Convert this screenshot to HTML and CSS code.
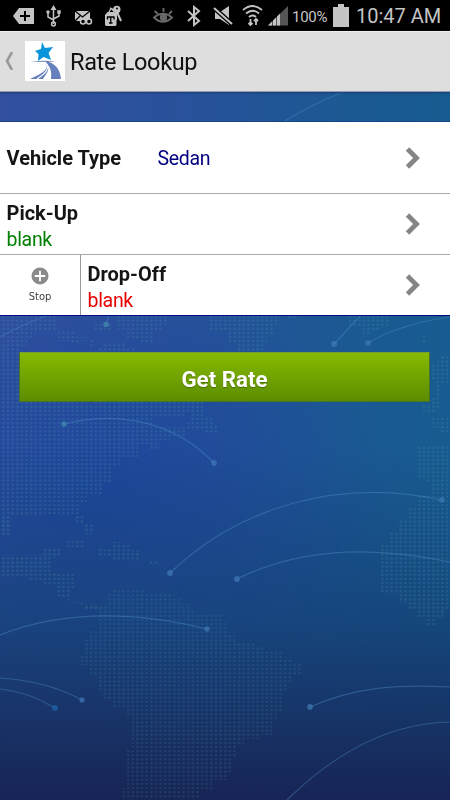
FILE: index.html
```html
<!DOCTYPE html>
<html lang="en">
<head>
<meta charset="utf-8">
<title>Rate Lookup</title>
<link rel="stylesheet" href="styles.css">
</head>
<body>
<div class="screen">
  <svg class="world" viewBox="0 0 450 800" aria-hidden="true">
    <defs>
      <pattern id="dots" width="4.622" height="4.1" x="1.1" y="416.95" patternUnits="userSpaceOnUse">
        <rect x="1.1" y="1" width="2.4" height="2.1" rx=".7"/>
      </pattern>
    </defs>
    <g class="land" fill="url(#dots)">
      <path d="M1 315H58V330H38L24 348H20V402H87V405H92V402H204V412H184V417H152V427H185V436H170V440H160V450H148V444H138V458H120V466H112V482H102V495H87V504H80V514H46V515H11V535H1Z"/>
      <path d="M94 324H112V332H94ZM58 331H76V337H88V341H58ZM71 340H80V343H71ZM89 340H94V347H103V342H126V347H134V352H98V347H89ZM117 315H168V325H162V332H154V343H140V338H126V329H117ZM209 315H280V325H275V334H267V343H263V352H238V342H228V330H209Z"/>
      <path d="M288 315H296V318H288ZM349 315H389V326H381V330H370V335H362V326H349ZM422 336H427V343H422ZM440 356H450V385H440V408H431V398H436V380H431V364H436ZM191 412H204V418H214V425H219V434H205V430H187V423H191ZM422 405H436V413H422ZM431 417H450V434H440V428H431Z"/>
      <path d="M418 446H450V610H445V619H436V625H426V618H416V610H408V603H400V595H391V592H381V545H390V532H399V518H408V508H417V495H431V482H426V478H417Z"/>
      <path d="M1 515H11V535H1ZM75 515H83V524H93V534H83V524H75ZM66 541H84V548H66ZM43 549H61V556H43ZM1 555H57V558H50V572H57V574H75V590H71V602H80V606H98V609H84V603H68V598H57V585H43V580H29V576H1ZM99 548H112V542H121V545H131V550H140V561H112V556H99ZM149 560H159V565H149Z"/>
      <path class="south" d="M112 590H145V593H172V599H181V604H191V611H196V615H222V623H229V635H235V643H255V646H263V651H283V657H292V663H301V675H292V682H287V690H282V712H277V719H272V735H260V739H244V744H236V758H231V772H227V780H212V790H201V798H122V788H127V750H132V718H126V708H112V699H103V690H98V676H89V665H80V655H85V640H90V631H99V610H85V604H108V594H112Z"/>
    </g>
    <g class="arcs">
      <path d="M283 122Q314 103 346 91M0 337Q25 323 49 315M109 315Q108 320 106 324M64 424C118 410 175 422 214 463M334 344L361 315M368 343Q400 324 450 317M170 573C238 508 337 477 442 500M237 579C303 546 380 547 450 562M0 635C66 609 137 612 207 629M0 678Q47 681 82 700M0 689Q29 692 55 708M310 707C355 687 399 684 450 687M287 800C337 751 390 723 450 722"/>
    </g>
    <g class="nodes">
      <circle class="teal" cx="106" cy="324.500" r="2.800"/><circle class="teal" cx="64" cy="424" r="2.800"/>
      <circle cx="214" cy="463" r="2.900"/><circle cx="334" cy="344" r="3"/><circle cx="368" cy="343" r="2.800"/>
      <circle cx="170" cy="573" r="2.900"/><circle cx="237" cy="579" r="2.900"/><circle cx="442" cy="500" r="2.800"/>
      <circle cx="207" cy="629" r="2.700"/><circle cx="82" cy="700" r="2.600"/><circle class="blue" cx="55" cy="708" r="3"/><circle cx="310" cy="707" r="2.900"/>
    </g>
  </svg>

  <header class="status">
    <svg class="tray" viewBox="0 0 290 31" aria-hidden="true">
      <path d="M13 16L19 8H34V24H19Z"/><path class="dark" d="M20 16H30M25 11V21"/>
      <g class="line"><path d="M53.500 9V24M48 12.500V17L53.500 20M59 12V16L53.500 19"/><circle cx="53.500" cy="24" r="1.900"/><circle cx="48" cy="12" r="1"/><path d="M58 11H60V13H58Z"/></g><path d="M53.500 5L56.500 10H50.500Z"/>
      <path d="M75 11H90V21H75Z"/><path class="dark thin" d="M75 11L82.500 17L90 11M75 21L80 16"/><g class="line"><circle class="hole" cx="83" cy="21.500" r="2.500"/><circle class="hole" cx="89" cy="21.500" r="2.500"/></g>
      <path d="M105 15L107.500 12H114L116.500 15V25L115.500 26H106L105 25Z"/><path class="dark thin" d="M107.500 19.500V17H114V19.500M110.750 17V23M109 23H112.500"/>
      <path class="key-blade" d="M117 12L121 21M116 13V20"/><circle cx="116.800" cy="9.500" r="3.700"/><path class="line thin" d="M109 12L111 8.500L115 12M110 8L115 10"/><circle class="hole" cx="117" cy="8.500" r="1"/>
      <g class="eye"><path d="M154 17.500Q163 10 172 17.500Q163 26 154 17.500Z"/><circle cx="163.500" cy="17.500" r="2.700"/><path d="M154.500 11L158 14M163.500 8V12M172 11L169 14"/></g>
      <path class="bt" d="M188 11L199 21L194 25V7L199 11L188 21"/>
      <path d="M215 12H220L229 6V25L220 19H215Z"/><path class="slash-back" d="M214 8L232 24"/><path class="slash" d="M214 8L232 24"/>
      <g class="wifi"><path d="M243 10Q252.500 2 262 10M246 13.500Q252.500 8 259 13.500M249 17Q252.500 14 256 17"/><path d="M250.500 19V25M248.500 23L250.500 25L252.500 23M256 25V19M254 21L256 19L258 21"/></g>
      <path class="signal-off" d="M268 25.500L288 6V25.500Z"/><path d="M268 25.500L272 21.500V25.500ZM273 25.500V20.500L276 17.500V25.500ZM277 25.500V16.500L280 13.500V25.500Z"/>
    </svg>
    <span class="percent">100%</span>
    <svg class="battery" viewBox="0 0 16 24" aria-hidden="true"><path d="M0 3H5V0H11V3H16V23H0Z"/></svg>
    <span class="clock">10:47 AM</span>
  </header>

  <div class="action-bar">
    <svg class="back" viewBox="0 0 8 18" aria-hidden="true"><path d="M7 0L2 9L7 18"/></svg>
    <svg class="logo" viewBox="0 0 40 40" aria-hidden="true">
      <path class="star" d="M17 1L20 7L28 6L23.500 12L26 19L18.500 16L13 20L13.500 13L10 10L16 8Z"/>
      <path class="road" d="M5 20.500Q21 19 31 20.500Q22 21 5 20.500ZM19 20C28 21 35 26 36 38H26C27 29 25 25 19 20ZM20 21C27 29 21 32 18 38H5C16 33 26 28 20 21Z"/>
      <path class="lane" d="M12 38C21 32 26 27 20 21"/>
    </svg>
    <h1>Rate Lookup</h1>
  </div>

  <main>
    <section class="form">
      <div class="row vehicle"><b>Vehicle Type</b><span class="choice">Sedan</span><svg class="chevron" viewBox="0 0 16 22"><path d="M2.500 2L11.500 11L2.500 20"/></svg></div>
      <div class="row place"><div class="field"><b>Pick-Up</b><span class="green">blank</span></div><svg class="chevron" viewBox="0 0 16 22"><path d="M2.500 2L11.500 11L2.500 20"/></svg></div>
      <div class="row place drop">
        <div class="stop"><svg viewBox="0 0 18 18"><circle cx="9" cy="9" r="8.500"/><path d="M9 3.700V14.300M3.700 9H14.300"/></svg><span>Stop</span></div>
        <div class="field"><b>Drop-Off</b><span class="red">blank</span></div><svg class="chevron" viewBox="0 0 16 22"><path d="M2.500 2L11.500 11L2.500 20"/></svg>
      </div>
    </section>
    <button class="rate">Get Rate</button>
  </main>
</div>
</body>
</html>
```
FILE: styles.css
```css
* { box-sizing: border-box; }
body { margin: 0; font-family: Roboto, "Liberation Sans", sans-serif; }
.screen {
  position: relative;
  width: 450px;
  height: 800px;
  overflow: hidden;
  background:
    linear-gradient(180deg, transparent 56%, rgba(20, 64, 118, .78) 78%, #172656 99%),
    radial-gradient(ellipse 300px 220px at 90px 490px, rgba(26, 68, 155, .85), transparent),
    linear-gradient(90deg, #3350a0 0%, #27529a 45%, #1b5992 78%, #175c90 100%);
}
.world { position: absolute; inset: 0; width: 450px; height: 800px; }
.land { opacity: .32; }
.land .south { opacity: .75; }
pattern rect { fill: #4790a5; }
.arcs { fill: none; stroke: #4f8fcb; stroke-width: 1.2; opacity: .4; }
.nodes { fill: #417ab7; opacity: .7; }
.nodes .teal { fill: #438cac; }
.nodes .blue { fill: #1b67ae; }

.status { position: relative; height: 31px; background: #000; display: flex; align-items: center; color: #c4c4c4; }
.tray { width: 290px; height: 31px; flex: none; fill: #c4c4c4; }
.tray .dark { stroke: #000; stroke-width: 2; fill: none; }
.tray .line { stroke: #c4c4c4; stroke-width: 1.5; fill: none; }
.tray .thin { stroke-width: 1.3; }
.tray .hole { fill: #000; }
.key-blade { stroke: #c4c4c4; stroke-width: 2; fill: none; }
.eye { fill: none; stroke: #686868; stroke-width: 1.9; }
.eye circle { fill: #686868; }
.bt { fill: none; stroke: #c4c4c4; stroke-width: 2; }
.slash-back { stroke: #000; stroke-width: 4.5; }
.slash { stroke: #c4c4c4; stroke-width: 2; }
.wifi { fill: none; stroke: #c4c4c4; stroke-width: 1.8; }
.signal-off { fill: #555; }
.percent { width: 43px; padding-left: 2px; font-size: 15px; letter-spacing: -.3px; padding-top: 3px; }
.battery { width: 16px; height: 24px; fill: #c4c4c4; flex: none; }
.clock { margin-left: 7px; font-size: 20px; white-space: nowrap; padding-top: 1px; }

.action-bar {
  position: relative;
  height: 61px;
  display: flex;
  align-items: center;
  padding: 0 0 1px 5px;
  background: #dedede;
  border-top: 1px solid #eee;
  border-bottom: 1px solid #929cad;
  box-shadow: 0 1px 2px #203b78;
}
.back { width: 8px; height: 18px; fill: none; stroke: #999; stroke-width: 2.6; }
.logo { width: 40px; height: 40px; margin: 0 5px 0 12px; background: #fff; }
.star { fill: #0794db; }
.road { fill: #667fbd; }
.lane { fill: none; stroke: #fff; stroke-width: 1.2; }
h1 { margin: 0; padding-top: 2px; font-size: 23.5px; letter-spacing: -.32px; font-weight: 400; color: #111; white-space: nowrap; }

main { position: relative; padding-top: 30px; }
.form { background: #fff; border-bottom: 1px solid #000c80; box-shadow: 0 -1px #164385; }
.row { display: flex; align-items: center; border-bottom: 1px solid #aaa; }
.row b { font-size: 20px; line-height: 26px; font-weight: 700; color: #151515; white-space: nowrap; }
.row span { font-size: 19.5px; line-height: 26px; letter-spacing: -.3px; padding-top: 1px; }
.row .choice { padding-top: 2px; }
.vehicle { height: 72px; padding-left: 6.5px; }
.vehicle b { width: 151px; }
.row .choice { color: #000080; }
.place { height: 61px; }
.drop { height: 60px; border: 0; }
.field { display: flex; flex-direction: column; padding: 5px 6.5px 0; }
.green { color: #008000; }
.red { color: #e60000; }
.chevron { width: 16px; height: 22px; margin-left: auto; margin-right: 29px; fill: none; stroke: #858585; stroke-width: 4.8; }
.stop { width: 81px; height: 60px; border-right: 1px solid #999; display: flex; flex-direction: column; align-items: center; padding-top: 12px; }
.stop svg { width: 18px; height: 18px; fill: #8b8b8b; stroke: #fff; stroke-width: 1.8; }
.stop circle { stroke: none; }
.row .stop span { font: 10px/13px "DejaVu Sans", sans-serif; letter-spacing: -.1px; color: #444; margin-top: 4px; }
.rate {
  display: block;
  width: 411px;
  height: 50px;
  margin: 36px auto 0 19px;
  padding: 4px 0 0;
  border: 1px solid #477323;
  border-top-color: #779f39;
  background: linear-gradient(#86ba00, #5c8d00);
  color: #fff;
  font: 700 22.3px Roboto, "Liberation Sans", sans-serif;
  text-shadow: 0 1px 1px rgba(0, 0, 0, .3);
}
```
